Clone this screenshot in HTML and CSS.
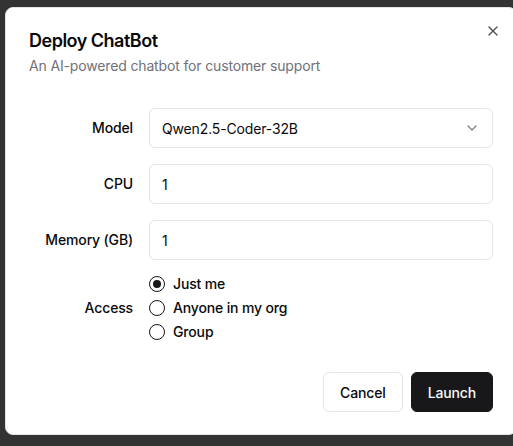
FILE: index.html
```html
<!DOCTYPE html>
<html lang="en">
<head>
<meta charset="utf-8">
<title>Deploy ChatBot</title>
<link rel="stylesheet" href="styles.css">
</head>
<body>
<div class="dialog" role="dialog">
  <div class="header">
    <h2 class="title">Deploy ChatBot</h2>
    <p class="desc">An AI-powered chatbot for customer support</p>
  </div>
  <div class="form">
    <div class="row">
      <label class="label">Model</label>
      <div class="field select">
        <span>Qwen2.5-Coder-32B</span>
        <svg class="chev" viewBox="0 0 24 24" width="16" height="16" fill="none" stroke="currentColor" stroke-width="2" stroke-linecap="round" stroke-linejoin="round"><path d="m6 9 6 6 6-6"/></svg>
      </div>
    </div>
    <div class="row">
      <label class="label">CPU</label>
      <div class="field"><span>1</span></div>
    </div>
    <div class="row">
      <label class="label">Memory (GB)</label>
      <div class="field"><span>1</span></div>
    </div>
    <div class="row">
      <label class="label">Access</label>
      <div class="radios">
        <div class="radio-item"><span class="radio checked"><span class="dot"></span></span><span>Just me</span></div>
        <div class="radio-item"><span class="radio"></span><span>Anyone in my org</span></div>
        <div class="radio-item"><span class="radio"></span><span>Group</span></div>
      </div>
    </div>
  </div>
  <div class="footer">
    <button class="btn outline">Cancel</button>
    <button class="btn primary">Launch</button>
  </div>
  <button class="close" aria-label="Close">
    <svg viewBox="0 0 24 24" width="16" height="16" fill="none" stroke="currentColor" stroke-width="2" stroke-linecap="round" stroke-linejoin="round"><path d="M18 6 6 18"/><path d="m6 6 12 12"/></svg>
  </button>
</div>
</body>
</html>
```

FILE: styles.css
```css
* { box-sizing: border-box; }
html, body { margin: 0; height: 100%; }
body {
  background: #333333;
  overflow: hidden;
  padding: 7px 0 0 5px;
  font-family: Inter, "Liberation Sans", sans-serif;
  color: #09090b;
  letter-spacing: -0.15px;
}
.dialog {
  position: relative;
  width: 512px;
  background: #fff;
  border: 1px solid #e4e4e7;
  border-radius: 8px;
  padding: 24px 23px 22px;
  display: flex;
  flex-direction: column;
  gap: 16px;
}
.header { display: flex; flex-direction: column; gap: 6px; }
.title {
  margin: 0;
  font-size: 18px;
  line-height: 18px;
  font-weight: 600;
  letter-spacing: -0.5px;
}
.desc {
  margin: 0;
  font-size: 14px;
  line-height: 20px;
  color: #71717a;
}
.form {
  padding: 16px 0;
  display: flex;
  flex-direction: column;
  gap: 16px;
}
.row {
  display: grid;
  grid-template-columns: repeat(4, 1fr);
  gap: 16px;
  align-items: center;
}
.label {
  text-align: right;
  font-size: 14px;
  line-height: 14px;
  font-weight: 500;
}
.field {
  grid-column: span 3;
  height: 40px;
  border: 1px solid #e4e4e7;
  border-radius: 6px;
  padding: 0 12px;
  display: flex;
  align-items: center;
  justify-content: space-between;
  font-size: 14px;
}
.chev { opacity: 0.5; }
.radios {
  grid-column: span 3;
  display: flex;
  flex-direction: column;
  gap: 8px;
}
.radio-item {
  display: flex;
  align-items: center;
  gap: 8px;
  font-size: 14px;
  line-height: 16px;
  font-weight: 500;
}
.radio {
  width: 16px;
  height: 16px;
  border: 1px solid #18181b;
  border-radius: 50%;
  display: flex;
  align-items: center;
  justify-content: center;
}
.dot {
  width: 8px;
  height: 8px;
  border-radius: 50%;
  background: #18181b;
}
.footer {
  display: flex;
  justify-content: flex-end;
  gap: 8px;
}
.btn {
  height: 40px;
  padding: 0 16px;
  border-radius: 6px;
  font-family: inherit;
  font-size: 14px;
  font-weight: 500;
  letter-spacing: -0.15px;
  cursor: pointer;
}
.outline { background: #fff; border: 1px solid #e4e4e7; color: #09090b; }
.primary { background: #18181b; border: 1px solid #18181b; color: #fafafa; }
.close {
  position: absolute;
  top: 15px;
  right: 15px;
  padding: 0;
  border: 0;
  background: none;
  color: #09090b;
  opacity: 0.7;
  display: flex;
}
```
